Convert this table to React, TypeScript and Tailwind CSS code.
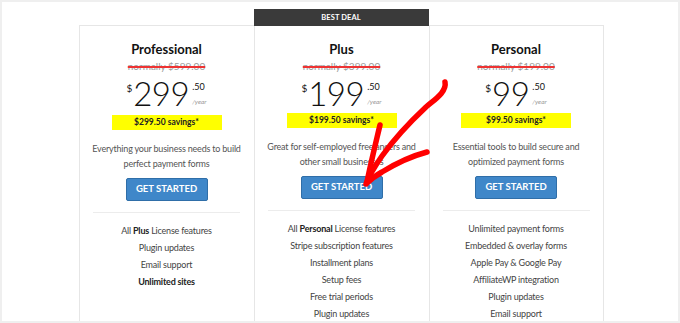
import React from "react";

type Plan = {
  name: string;
  was: string;
  dollars: string;
  savings: string;
  desc: [string, string];
  features: React.ReactNode[];
  badge?: boolean;
  last?: boolean;
};

const plans: Plan[] = [
  {
    name: "Professional",
    was: "normally $599.00",
    dollars: "299",
    savings: "$299.50 savings*",
    desc: ["Everything your business needs to build", "perfect payment forms"],
    features: [
      <>
        All <b className="text-[#222]">Plus</b> License features
      </>,
      "Plugin updates",
      "Email support",
      <b className="text-[#222]">Unlimited sites</b>,
    ],
  },
  {
    name: "Plus",
    was: "normally $399.00",
    dollars: "199",
    savings: "$199.50 savings*",
    desc: ["Great for self-employed freelancers and", "other small businesses"],
    badge: true,
    features: [
      <>
        All <b className="text-[#222]">Personal</b> License features
      </>,
      "Stripe subscription features",
      "Installment plans",
      "Setup fees",
      "Free trial periods",
      "Plugin updates",
    ],
  },
  {
    name: "Personal",
    was: "normally $199.00",
    dollars: "99",
    savings: "$99.50 savings*",
    desc: ["Essential tools to build secure and", "optimized payment forms"],
    last: true,
    features: [
      "Unlimited payment forms",
      "Embedded & overlay forms",
      "Apple Pay & Google Pay",
      "AffiliateWP integration",
      "Plugin updates",
      "Email support",
    ],
  },
];

const PlanCard = ({ plan }: { plan: Plan }) => (
  <div className="w-[175px] shrink-0 flex flex-col min-h-0">
    {/* badge / spacer */}
    {plan.badge ? (
      <div className="h-[17px] shrink-0 bg-[#3a3a3a] text-white text-[7.5px] font-bold flex items-center justify-center tracking-[0.1px]">
        BEST DEAL
      </div>
    ) : (
      <div className="h-[16px] shrink-0" />
    )}

    <div
      className={`flex-1 min-h-0 overflow-hidden bg-white border-[#e6e6e6] border-l flex flex-col items-center pt-[12px] ${
        plan.badge ? "" : "border-t"
      } ${plan.last ? "border-r" : ""}`}
    >
      <h2 className="text-[13px] leading-[22px] font-bold text-[#111]">
        {plan.name}
      </h2>

      <p className="text-[10px] leading-[12px] text-[#999] line-through decoration-[#e33] decoration-[1.5px]">
        {plan.was}
      </p>

      {/* PRICE */}
      <div className="flex items-start h-[42px] mt-[1px] text-[#111]">
        <span className="text-[10px] leading-none mt-[10px] mr-[1px]">$</span>
        <span className="text-[33px] leading-[40px] font-light tracking-[-0.5px]">
          {plan.dollars}
        </span>
        <div className="flex flex-col ml-[3px] mt-[9px]">
          <span className="text-[9px] leading-[10px]">.50</span>
          <span className="text-[6.5px] leading-[10px] italic text-[#999] mt-[5px]">
            /year
          </span>
        </div>
      </div>

      <div className="w-[110px] h-[15px] shrink-0 bg-[#ffff00] flex items-center justify-center text-[8.5px] font-bold text-[#222]">
        {plan.savings}
      </div>

      <div className="mt-[11px] text-[9px] tracking-[-0.2px] leading-[15px] text-[#555] text-center">
        <p>{plan.desc[0]}</p>
        <p>{plan.desc[1]}</p>
      </div>

      <button className="mt-[7px] shrink-0 w-[82px] h-[23px] bg-[#3f87c9] border border-[#2f6ea8] rounded-[2px] text-white text-[9.5px] font-bold">
        GET STARTED
      </button>

      <div className="w-[147px] h-px shrink-0 bg-[#ececec] mt-[11px]" />

      <ul className="mt-[9px] text-[9px] tracking-[-0.2px] leading-[17px] text-[#444] text-center">
        {plan.features.map((f, i) => (
          <li key={i}>{f}</li>
        ))}
      </ul>
    </div>
  </div>
);

export default function App() {
  return (
    <div
      className="w-[680px] h-[323px] bg-[#efefef] p-[2px] overflow-hidden"
      style={{ fontFamily: "Lato, 'Open Sans', sans-serif" }}
    >
      <div className="relative w-full h-full bg-white flex justify-center pt-[7px] pl-[2px] overflow-hidden">
        {plans.map((p) => (
          <PlanCard key={p.name} plan={p} />
        ))}

        {/* hand-drawn arrow */}
        <svg
          className="absolute left-0 top-0 pointer-events-none"
          width="676"
          height="319"
          viewBox="2 2 676 319"
        >
          <g
            fill="none"
            stroke="#ff0000"
            strokeWidth="5.5"
            strokeLinecap="round"
            strokeLinejoin="round"
          >
            <path d="M445 82 C447 92 434 100 426 107 C410 122 392 142 382 156 C375 166 369 176 366 184" />
            <path d="M380 125 C376 142 371 162 367 182" />
            <path d="M427 152 C412 156 395 164 382 172 C375 176 370 180 367 183" />
          </g>
        </svg>
      </div>
    </div>
  );
}
